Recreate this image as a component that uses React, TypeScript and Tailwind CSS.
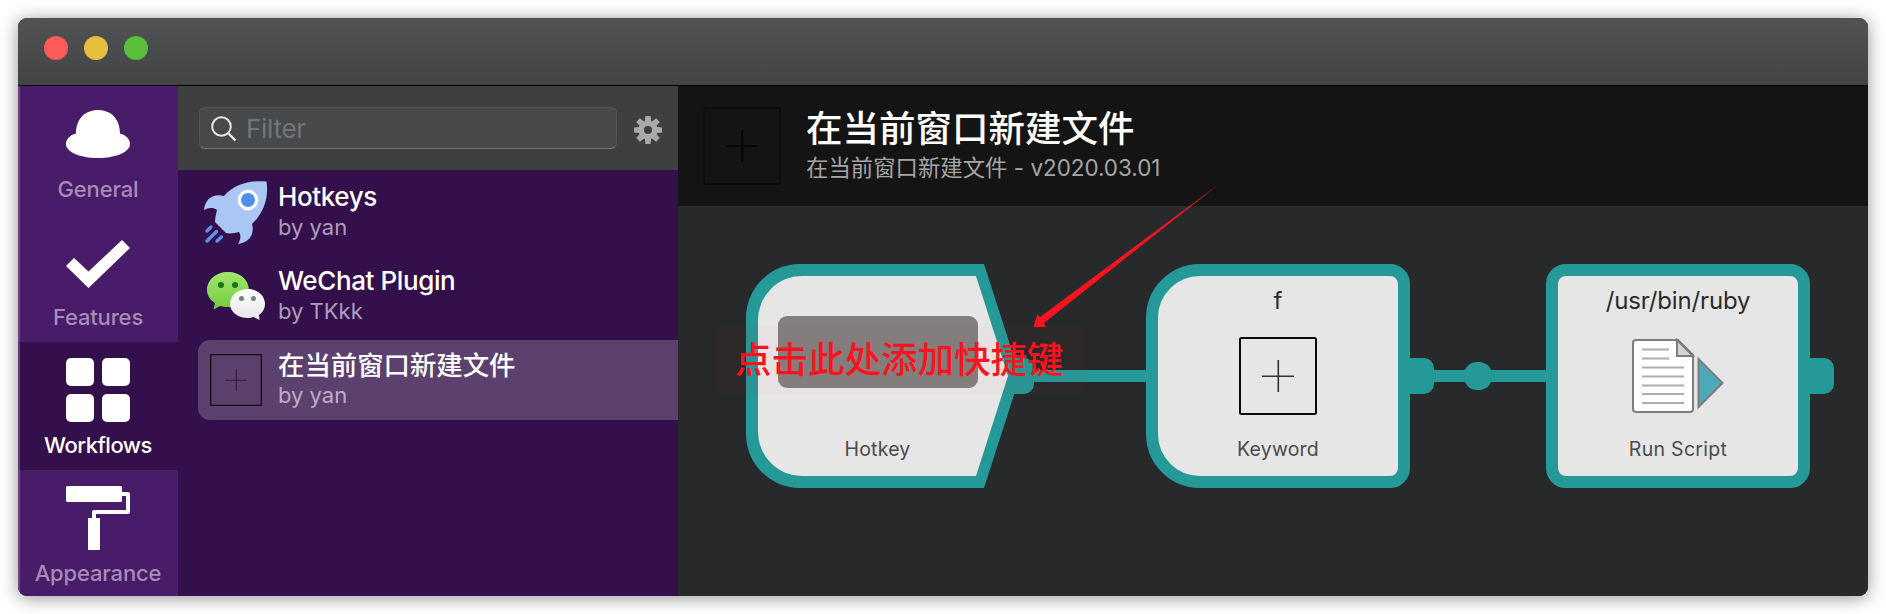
import React from "react";

const CJK = "font-['Inter','Noto_Sans_CJK_SC',sans-serif]";

function PlusBox({ className }: { className: string }) {
  return (
    <svg viewBox="0 0 78 78" className={className} fill="none">
      <rect x="1" y="1" width="76" height="76" rx="1.5" stroke="#0c0c0c" strokeWidth="2" />
      <path d="M23 39.3H55M39.3 23V55" stroke="currentColor" strokeWidth="1.6" />
    </svg>
  );
}

function HatIcon() {
  return (
    <svg viewBox="0 0 64 48" className="h-12 w-16" fill="white">
      <path d="M10 23.500C10 9 19 0 32 0S54 9 54 23.500C60 25 64 29 64 34C64 42 50 48 32 48S0 42 0 34C0 29 4 25 10 23.500Z" />
    </svg>
  );
}

function CheckIcon() {
  return (
    <svg viewBox="0 0 64 48" className="mt-1 h-12 w-16" fill="white">
      <path d="M0 26L8 18L22.500 31.500L56 0L64 8L22.500 48Z" />
    </svg>
  );
}

function GridIcon() {
  return (
    <div className="grid h-16 w-16 grid-cols-2 gap-2">
      <div className="rounded-[5px] bg-white" />
      <div className="rounded-[5px] bg-white" />
      <div className="rounded-[5px] bg-white" />
      <div className="rounded-[5px] bg-white" />
    </div>
  );
}

function RollerIcon() {
  return (
    <svg viewBox="0 0 64 64" className="h-16 w-16" fill="white">
      <rect width="56" height="16" rx="1.5" />
      <path d="M54 8H62V26H28V34" fill="none" stroke="white" strokeWidth="4" strokeLinejoin="round" />
      <rect x="22" y="32" width="12" height="32" />
    </svg>
  );
}

function RocketIcon() {
  return (
    <svg viewBox="0 0 64 64" className="h-16 w-16">
      <path
        d="M62.500 1.500C65 17 60 33 48 44C51 54 45 63 34 64C37 59 37 55 35 52C31 53 26 54 22 53L11 42C11 38 12 34 13 30C9 27 4 28 0 30C1 18 10 13 20 16C30 5 44 0 62.500 1.500Z"
        fill="#a9c6f5"
      />
      <circle cx="44" cy="20" r="8.700" fill="#4f8eea" stroke="white" strokeWidth="3.400" />
      <path d="M3 51L7 47M3 61L12.500 51.500M13 61L17.500 57" stroke="#5b92ea" strokeWidth="3.400" strokeLinecap="round" />
    </svg>
  );
}

function WeChatIcon() {
  return (
    <svg viewBox="0 0 60 50" className="h-[50px] w-[60px]">
      <defs>
        <linearGradient id="bubbleGreen" x1="0" y1="0" x2="0" y2="1">
          <stop offset="0" stopColor="#a1e670" />
          <stop offset="1" stopColor="#72cc3b" />
        </linearGradient>
        <linearGradient id="bubbleWhite" x1="0" y1="0" x2="0" y2="1">
          <stop offset="0" stopColor="#fff" />
          <stop offset="1" stopColor="#e4e6e9" />
        </linearGradient>
      </defs>
      <path d="M22 1C34 1 43 9 43 19S34 36 22 36C19 36 16 35.500 14 35L7.500 38.500L9 32C4 29 1 24 1 19C1 9 10 1 22 1Z" fill="url(#bubbleGreen)" />
      <circle cx="15" cy="14" r="3" fill="#187418" />
      <circle cx="29" cy="14" r="3" fill="#187418" />
      <path d="M42 18C51.500 18 59 24.500 59 33C59 37.500 57 41 53 44L53.500 49L47.500 46C46 46.500 44 47 42 47C32 47 24 41 24 33C24 24.500 32 18 42 18Z" fill="url(#bubbleWhite)" />
      <circle cx="35.500" cy="27.500" r="2.500" fill="#7b7f7f" />
      <circle cx="47.500" cy="27.500" r="2.500" fill="#7b7f7f" />
    </svg>
  );
}

function GearIcon() {
  return (
    <svg viewBox="-14 -14 28 28" className="h-7 w-7">
      <g fill="#a9a9aa">
        <path d="M-2.600 -14H2.600L3.200 -8H-3.200Z" />
        <path d="M-2.600 -14H2.600L3.200 -8H-3.200Z" transform="rotate(45)" />
        <path d="M-2.600 -14H2.600L3.200 -8H-3.200Z" transform="rotate(90)" />
        <path d="M-2.600 -14H2.600L3.200 -8H-3.200Z" transform="rotate(135)" />
        <path d="M-2.600 -14H2.600L3.200 -8H-3.200Z" transform="rotate(180)" />
        <path d="M-2.600 -14H2.600L3.200 -8H-3.200Z" transform="rotate(225)" />
        <path d="M-2.600 -14H2.600L3.200 -8H-3.200Z" transform="rotate(270)" />
        <path d="M-2.600 -14H2.600L3.200 -8H-3.200Z" transform="rotate(315)" />
      </g>
      <circle r="6.800" fill="none" stroke="#a9a9aa" strokeWidth="5.600" />
    </svg>
  );
}

function ScriptIcon() {
  return (
    <svg viewBox="0 0 92 76" className="h-[76px] w-[92px]">
      <path d="M4 2H46L61 17V71A3 3 0 0 1 58 74H4A3 3 0 0 1 1 71V5A3 3 0 0 1 4 2Z" fill="white" stroke="#7d7d7d" strokeWidth="2" />
      <path d="M45 2V18H61Z" fill="#d5d5d5" stroke="#7d7d7d" strokeWidth="2" />
      <path d="M10 11.500H37M10 20.500H37M10 29.500H52M10 38.500H52M10 47.500H52M10 56H52M10 65H52" stroke="#adadad" strokeWidth="2" />
      <path d="M66.500 21V69L90.500 45Z" fill="#4dabb9" stroke="#7d7d7d" strokeWidth="2" />
    </svg>
  );
}

function NavItem({ label, active, icon }: { label: string; active?: boolean; icon: React.ReactNode }) {
  return (
    <div className={`flex h-32 shrink-0 flex-col items-center pt-4 ${active ? "bg-[#33104b] tracking-[-0.5px] text-white" : "bg-[#481c68] tracking-[-0.15px] text-[#a78bb7]"}`}>
      <div className="flex h-16 items-center">{icon}</div>
      <div className="mt-[9px] text-[22px] leading-7 font-medium">{label}</div>
    </div>
  );
}

function WorkflowRow({ title, titleClass, author, icon, selected }: { title: string; titleClass: string; author: string; icon: React.ReactNode; selected?: boolean }) {
  return (
    <div className="flex h-[84px] items-center pl-5">
      <div className={`flex h-20 flex-1 items-center rounded-l-xl ${selected ? "bg-[#5c416f]" : ""}`}>
        <div className="flex w-[76px] items-center justify-center">{icon}</div>
        <div className="ml-1 flex flex-col pb-0.5">
          <div className={`h-8 leading-8 font-medium whitespace-nowrap text-white ${titleClass}`}>{title}</div>
          <div className={`h-7 text-[22px] leading-7 ${selected ? "text-[#bfadc8]" : "text-[#ae9db9]"}`}>{author}</div>
        </div>
      </div>
    </div>
  );
}

export default function App() {
  return (
    <div className={`h-[614px] w-[1886px] overflow-hidden bg-white p-[18px] ${CJK}`}>
      <div className="flex h-[578px] w-[1850px] flex-col overflow-hidden rounded-[9px] bg-[#28292b] shadow-[0_2px_18px_rgba(0,0,0,0.42)]">
        <div className="flex h-[68px] shrink-0 items-start gap-4 border-b border-black bg-linear-to-b from-[#515254] to-[#434446] pt-[18px] pl-[26px]">
          <div className="h-6 w-6 rounded-full bg-[#fc5b57]" />
          <div className="h-6 w-6 rounded-full bg-[#e5bf3c]" />
          <div className="h-6 w-6 rounded-full bg-[#57c038]" />
        </div>
        <div className="flex min-h-0 flex-1">
          <nav className="relative flex w-40 shrink-0 flex-col overflow-hidden">
            <NavItem label="General" icon={<HatIcon />} />
            <NavItem label="Features" icon={<CheckIcon />} />
            <NavItem label="Workflows" active icon={<GridIcon />} />
            <NavItem label="Appearance" icon={<RollerIcon />} />
            <div className="absolute inset-y-0 left-0 w-0.5 bg-white/20" />
          </nav>
          <aside className="flex w-[500px] shrink-0 flex-col bg-[#33104b]">
            <div className="flex h-[84px] items-start bg-[#3e3f41] pt-[21px] pl-[21px]">
              <div className="flex h-[42px] w-[418px] items-center rounded-md border border-[#525355] border-b-[#747576] bg-[#48494b] pl-[11px]">
                <svg viewBox="0 0 26 26" className="mt-0.5 h-[26px] w-[26px]" fill="none" stroke="#e8e8e8" strokeWidth="2">
                  <circle cx="10.500" cy="10.500" r="9.300" />
                  <path d="M17 17L24.500 24.500" strokeWidth="2.400" />
                </svg>
                <span className="mt-0.5 ml-[9px] text-[26px] leading-8 tracking-[-0.3px] text-[#747577]">Filter</span>
              </div>
              <div className="mt-[9px] ml-[17px]"><GearIcon /></div>
            </div>
            <WorkflowRow title="Hotkeys" titleClass="text-[26px] tracking-[-0.4px]" author="by yan" icon={<RocketIcon />} />
            <WorkflowRow title="WeChat Plugin" titleClass="text-[26px] tracking-[-0.4px]" author="by TKkk" icon={<WeChatIcon />} />
            <WorkflowRow title="在当前窗口新建文件" titleClass="text-[26.4px]" author="by yan" selected icon={<PlusBox className="h-[52px] w-[52px] text-[#2d1838]" />} />
          </aside>
          <main className="flex min-w-0 flex-1 flex-col">
            <header className="flex h-[120px] shrink-0 bg-[#141414] pt-[21px] pl-[25px]">
              <PlusBox className="h-[78px] w-[78px] text-black" />
              <div className="ml-[25px]">
                <div className="h-[46px] text-[36.500px] leading-[44px] font-medium text-white">在当前窗口新建文件</div>
                <div className="text-[22.400px] leading-[30px] text-[#a5a5a5]">在当前窗口新建文件 - v2020.03.01</div>
              </div>
            </header>
            <section className="relative flex-1 bg-[#28292b]">
              <div className="absolute top-[164px] left-[320px] h-3 w-[560px] bg-[#259997]" />
              <div className="absolute top-[152px] left-[326px] h-9 w-[30px] rounded-[10px] bg-[#259997]" />
              <div className="absolute top-[152px] left-[720px] h-9 w-9 rounded-[10px] bg-[#259997]" />
              <div className="absolute top-[156px] left-[786px] h-7 w-7 rounded-[13px] bg-[#259997]" />
              <div className="absolute top-[152px] left-[1120px] h-9 w-9 rounded-[10px] bg-[#259997]" />

              <div className="absolute top-[58px] left-[68px] h-56 w-[280px]">
                <svg viewBox="0 0 280 224" className="h-56 w-[280px]">
                  <path d="M54 0H238L274 112L238 224H54A54 54 0 0 1 0 170V54A54 54 0 0 1 54 0Z" fill="#259997" />
                  <path d="M56 12H230L262 112L230 212H56A44 44 0 0 1 12 168V56A44 44 0 0 1 56 12Z" fill="#e6e6e6" />
                </svg>
                <div className="absolute top-[52px] left-8 h-[72px] w-[200px] rounded-[9px] bg-[#808080]" />
                <div className="absolute top-[171px] left-0 w-[263px] text-center text-[19.500px] leading-7 tracking-[0.2px] text-[#4b4b4b]">Hotkey</div>
              </div>

              <div className="absolute top-[58px] left-[468px] flex h-56 w-[264px] flex-col items-center rounded-l-[54px] rounded-r-[20px] border-[12px] border-[#259997] bg-[#e6e6e6]">
                <div className="mt-[9px] h-8 text-[24px] leading-8 text-[#2b2b2b]">f</div>
                <PlusBox className="mt-5 h-[78px] w-[78px] text-[#333]" />
                <div className="mt-5 text-[19.500px] leading-7 tracking-[0.2px] text-[#4b4b4b]">Keyword</div>
              </div>

              <div className="absolute top-[58px] left-[868px] flex h-56 w-[264px] flex-col items-center rounded-[20px] border-[12px] border-[#259997] bg-[#e6e6e6]">
                <div className="mt-[9px] h-8 text-[24px] leading-8 tracking-[-0.15px] text-[#2b2b2b]">/usr/bin/ruby</div>
                <div className="mt-5 flex h-[78px] items-center"><ScriptIcon /></div>
                <div className="mt-5 text-[19.500px] leading-7 tracking-[0.3px] text-[#4b4b4b]">Run Script</div>
              </div>

              <div className="absolute top-[120px] left-10 h-[68px] w-[365px] bg-red-600/[0.025]" />
              <div className="absolute top-[127px] left-[57px] text-[36.500px] leading-[54px] font-medium whitespace-nowrap text-[#fb1420]">点击此处添加快捷键</div>
              <svg viewBox="0 0 186 144" className="absolute -top-[22px] left-[355px] h-36 w-[186px]" fill="#fb1420">
                <path d="M186 0L11 139L13 143L0.500 143L4.500 130L6.500 133.500Z" />
              </svg>
            </section>
          </main>
        </div>
      </div>
    </div>
  );
}
